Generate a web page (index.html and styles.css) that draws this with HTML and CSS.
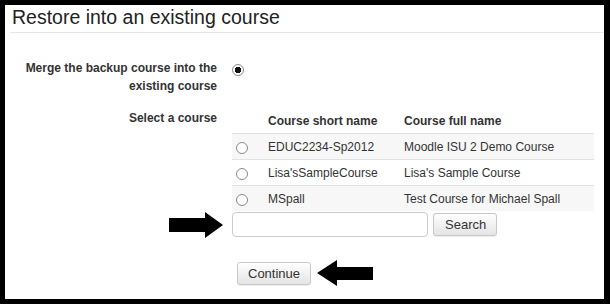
FILE: index.html
```html
<!DOCTYPE html>
<html lang="en">

<head>
    <meta charset="UTF-8">
    <title>Restore into an existing course</title>
    <link rel="stylesheet" href="styles.css">
</head>

<body>
    <div class="frame">
        <h2 class="title">Restore into an existing course</h2>

        <form class="restore">
            <div class="fitem merge">
                <div class="flabel">Merge the backup course into the existing course</div>
                <div class="felement">
                    <input type="radio" name="target" class="radio" checked aria-label="Merge">
                </div>
            </div>

            <div class="fitem select">
                <div class="flabel">Select a course</div>
                <div class="felement">
                    <table class="courses">
                        <thead>
                            <tr>
                                <th class="c0"></th>
                                <th class="c1">Course short name</th>
                                <th class="c2">Course full name</th>
                            </tr>
                        </thead>
                        <tbody>
                            <tr class="odd">
                                <td class="c0"><input type="radio" name="course" class="radio" aria-label="EDUC2234-Sp2012"></td>
                                <td class="c1">EDUC2234-Sp2012</td>
                                <td class="c2">Moodle ISU 2 Demo Course</td>
                            </tr>
                            <tr>
                                <td class="c0"><input type="radio" name="course" class="radio" aria-label="Lisa'sSampleCourse"></td>
                                <td class="c1">Lisa'sSampleCourse</td>
                                <td class="c2">Lisa's Sample Course</td>
                            </tr>
                            <tr class="odd">
                                <td class="c0"><input type="radio" name="course" class="radio" aria-label="MSpall"></td>
                                <td class="c1">MSpall</td>
                                <td class="c2">Test Course for Michael Spall</td>
                            </tr>
                        </tbody>
                    </table>

                    <div class="search">
                        <svg class="arrow arrow-right" width="54" height="26" viewBox="0 0 54 26" aria-hidden="true">
                            <polygon points="0,6 36,6 36,0 54,13 36,26 36,20 0,20" fill="#000"/>
                        </svg>
                        <input type="text" class="searchbox" aria-label="Search courses">
                        <button type="button" class="btn">Search</button>
                    </div>
                </div>
            </div>

            <div class="fitem actions">
                <div class="flabel"></div>
                <div class="felement">
                    <button type="submit" class="btn continue">Continue</button>
                    <svg class="arrow" width="56" height="26" viewBox="0 0 56 26" aria-hidden="true">
                        <polygon points="0,13 20,0 20,7 56,7 56,20 20,20 20,26" fill="#000"/>
                    </svg>
                </div>
            </div>
        </form>
    </div>
</body>

</html>
```

FILE: styles.css
```css
body {
    margin: 0;
    padding: 0;
    background: #000;
    font-family: "Liberation Sans", Arial, sans-serif;
    color: #333;
}

.frame {
    margin: 5px 6px 5px 5px;
    height: 294px;
    background: #fff;
    overflow: hidden;
}

.title {
    margin: 0 0 0 5px;
    padding: 1px 0 4px 2px;
    font-size: 19.5px;
    line-height: 22px;
    font-weight: normal;
    color: #222;
    border-bottom: 1px solid #e6e6e6;
}

.fitem {
    display: flex;
    gap: 15px;
}

.flabel {
    width: 212px;
    flex: none;
    text-align: right;
    font-size: 12px;
    font-weight: bold;
    line-height: 18px;
}

.merge {
    margin-top: 26px;
}

.merge .flabel {
    padding-left: 18px;
    box-sizing: border-box;
}

.select {
    margin-top: 14px;
}

.select .felement {
    position: relative;
}

.radio {
    appearance: none;
    width: 12px;
    height: 12px;
    margin: 0;
    border: 1px solid #8a8a8a;
    border-radius: 50%;
    background: #fff;
    box-sizing: border-box;
    vertical-align: middle;
}

.radio:checked {
    background: radial-gradient(circle, #111 0 3px, #fff 3.5px);
}

.merge .radio {
    margin: 3px 0 0 0;
}

.courses {
    width: 362px;
    border-collapse: collapse;
    font-size: 12px;
    line-height: 14px;
}

.courses th {
    text-align: left;
    font-weight: bold;
    padding: 5px 8px 5px;
    border-bottom: 1px solid #e2e2e2;
}

.courses td {
    padding: 6px 8px 5px;
    border-bottom: 1px solid #e2e2e2;
}

.courses tr:last-child td {
    border-bottom: none;
}

.courses .odd {
    background: #f7f7f7;
}

.courses .c0 {
    width: 12px;
    padding-left: 4px;
    padding-right: 12px;
}

.courses .c1 {
    width: 120px;
}

.search {
    display: flex;
    align-items: center;
    gap: 5px;
    margin-top: 1px;
}

.arrow-right {
    position: absolute;
    left: -63px;
}

.searchbox {
    width: 196px;
    height: 25px;
    box-sizing: border-box;
    border: 1px solid #ccc;
    border-radius: 4px;
    margin: 0;
}

.btn {
    font-family: "Liberation Sans", Arial, sans-serif;
    font-size: 13px;
    color: #333;
    height: 23px;
    padding: 0 10px 0 11px;
    border: 1px solid #c8c8c8;
    border-radius: 3px;
    background: linear-gradient(#fff, #e4e4e4);
    box-shadow: 0 1px 1px rgba(0, 0, 0, 0.08);
}

.actions {
    margin-top: 23px;
}

.actions .felement {
    display: flex;
    align-items: center;
    gap: 6px;
    padding-left: 5px;
}

.continue {
    padding: 0 10px;
}
```
